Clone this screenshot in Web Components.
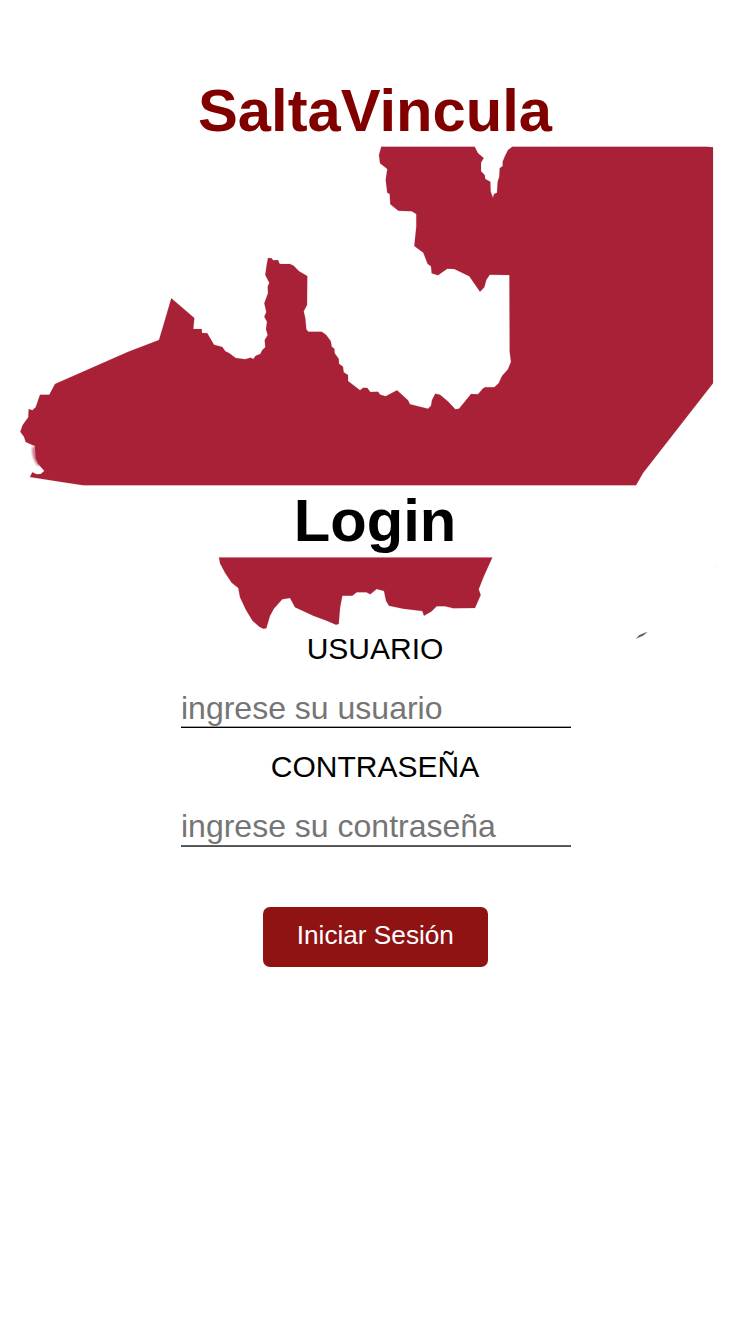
<!DOCTYPE html>
<html lang="es">
<head>
<meta charset="utf-8">
<title>SaltaVincula</title>
<style>
html, body { margin: 0; background: #fff; font-family: "Liberation Sans", Arial, sans-serif; }
</style>
</head>
<body>
<login-page>
  <page-title style="--title-color:#800000">SaltaVincula</page-title>
  <page-title slot="form">Login</page-title>
  <text-field slot="form" label="USUARIO" type="text" hint="ingrese su usuario" style="--label-height:57px;--input-pad:2px;--rule-top:#a0a0a0;--rule-bottom:#000"></text-field>
  <text-field slot="form" label="CONTRASEÑA" type="password" hint="ingrese su contraseña" style="--rule-top:#606060;--rule-bottom:#505254"></text-field>
  <action-button slot="form">Iniciar Sesión</action-button>
</login-page>
<script>
class ShadowElement extends HTMLElement {
  constructor() {
    super();
    this.attachShadow({ mode: 'open' }).innerHTML = this.render();
  }
}

customElements.define('province-map', class extends ShadowElement {
  render() {
    return `<style>:host{display:block}svg{display:block}</style>
<svg width="750" height="660" viewBox="0 0 750 660" aria-hidden="true">
<defs><filter id="soft" x="-100%" y="-100%" width="300%" height="300%"><feGaussianBlur stdDeviation="1.2"/></filter>
<filter id="speck" x="-100%" y="-100%" width="300%" height="300%"><feGaussianBlur stdDeviation=".7"/></filter></defs>
<path d="M34 447Q33 457 39 465" fill="none" stroke="#a82136" stroke-opacity=".7" stroke-width="3" filter="url(#soft)"/>
<g fill="#a82136" stroke="#a82136" stroke-opacity=".3" stroke-width=".5">
<path d="M20.3 431.7L22.7 425L28.3 417.3L28.7 409L32.3 410.3L35.7 407.3L40 394.7H49.3L55 384L128.3 351.7L159 340L164 323.3L171.3 298.3L194.3 318L193.3 329H201.7L202 333L207.3 333.3L214 344.7L222.3 347L225.3 351.3L229 353L235.7 358L245 359.3L250.7 357.7L253.3 359L255.7 355.7L260.3 354L262.3 350L265.3 347.3L264.7 340L267.7 335L266 329.3L267 321.7L264.3 316.7L266.3 312L264.3 303.3L268 293.3L267.7 286.7L269.3 282.7L265.3 275L266.7 265L268 258L271.7 258.3L273 260.3L278 260L279.7 264H290L293.7 265.7L299 271.3L307.3 276L307 305L303.7 311.3L305.3 318.3L306.3 329.3L308.3 331.7H321.7L326 334.7L330.7 341L331.7 346.7L334.3 348.7L334.7 353.3L338.7 358.7L339 363.7L343 366.7L343.7 372.3L348 375V381L360 390.3L363.3 387.7L367.3 388L370.3 392L378 391.7L380.3 394.7L385.7 396.3L397 390.3L408 400.3L410 404.3L428 408.7L431 405.7L432 400L435.3 393.7L440 394.7L448.3 401.7L455.3 409.3L459 408.7L471 394L478 394.3L482.7 388.7L485 387.3H494.3L498.7 383.3L502 376L508 369.3L511 361.7L509.7 351.7L509.4 275L489.7 274.7L486.3 280L484.3 287.3L480 291.7L469.3 276.3L454.3 269L447.3 268.7L438 275.3L431.7 273.3L431 266.3L427.7 264L423.3 252.7L414.3 246L416.3 226.7V214L411.7 211.3L398.3 210.7L390.3 204.3L389.7 194L387.3 192.7L385.7 180L387.3 169L380 163.3L379 155L381.3 146.8H474.7L478 153.3L483.7 158L481 162.7V171.3L484.7 175L485.3 179L490.3 181.7L490.7 191.7L493 197.7L494 194L497 192.7L497.7 181.7L499.3 176.7L499.7 168.3L502.7 166V161.7L505 156L508 150L512.3 146.8H706.7L713 147.3V383.3L643 473L636 485.3H83.3L61.7 482L30 477L32.3 472.3L36.7 474.3L40.7 474L44.3 471L38.3 464L35.7 458.3L34.7 445.7L32.3 445L25.7 442L24 436.7Z"/>
<path d="M219 557.4L220 563.3L225 572.7L231.7 582.7L238.3 588L240 597.3L246 610L252.7 621L259.3 626.7L263.3 628.7L266.3 628.3L270 615.7L274 608.5L282.3 599.3L290 598L295 607.3L313.3 615.7L326.7 620.7L336 624.7L338.7 624L340 608.3L342.3 595.7H352.3L356.7 592.3H366.3L370.3 594.3L376.7 589L384 591L386 600.7L389 605.7L403.3 608.7L422.3 611L424 615.7L431.7 611.3L436.7 606.3H445L453.3 608.3L475 608L480.7 595L478.7 589.3L483.5 577L492.3 557.4Z"/>
</g>
<path d="M636 638.8L639 635.2L644 633L647.5 632L643 635.8Z" fill="#444" fill-opacity=".85" filter="url(#speck)"/>
<path d="M714.5 567.5h2" stroke="#f4f4f4"/>
</svg>`;
  }
});

customElements.define('page-title', class extends ShadowElement {
  render() {
    return `<style>:host{display:block;text-align:center}h1{margin:0;font-size:59.7px;line-height:72px;font-weight:700;color:var(--title-color,#000)}</style><h1><slot></slot></h1>`;
  }
});

customElements.define('text-field', class extends ShadowElement {
  render() {
    return `<style>
:host{display:flex;flex-direction:column;align-items:center;height:118px;width:390px;font-size:30px}
label{line-height:36px;height:var(--label-height,58px);color:#000}
input{box-sizing:border-box;width:390px;height:38px;margin:0 -1px 0 1px;padding:var(--input-pad,0) 0 0;border:0;outline:0;background:none;font:32px "Liberation Sans",Arial,sans-serif}
input::placeholder{color:#757575;opacity:1}
i{display:block;width:100%;height:1px;margin:0 -1px 0 1px;background:var(--rule-top);border-bottom:1px solid var(--rule-bottom)}
</style><label for="f">${this.getAttribute('label')}</label><input id="f" type="${this.getAttribute('type')}" placeholder="${this.getAttribute('hint')}"><i></i>`;
  }
});

customElements.define('action-button', class extends ShadowElement {
  render() {
    return `<style>:host{display:block;margin:39.6px 0 0 .7px}
button{display:block;box-sizing:border-box;width:225.3px;height:60px;margin:0;padding:0 0 3px;border:0;border-radius:7px;background:#8f1313;color:#fff;font:26.2px "Liberation Sans",Arial,sans-serif}</style><button type="button"><slot></slot></button>`;
  }
});

customElements.define('login-page', class extends ShadowElement {
  render() {
    return `<style>
:host{display:block;position:relative;width:750px;height:1334px;overflow:hidden}
province-map{position:absolute;left:0;top:0}
main{position:relative;display:grid;grid-template-rows:485px auto;height:100%;align-content:start}
header{padding-top:75px}
section{display:flex;flex-direction:column;align-items:center}
::slotted(page-title){width:100%}
::slotted(text-field[label="USUARIO"]){margin-top:74px}
</style><province-map></province-map><main><header><slot></slot></header><section><slot name="form"></slot></section></main>`;
  }
});
</script>
</body>
</html>
